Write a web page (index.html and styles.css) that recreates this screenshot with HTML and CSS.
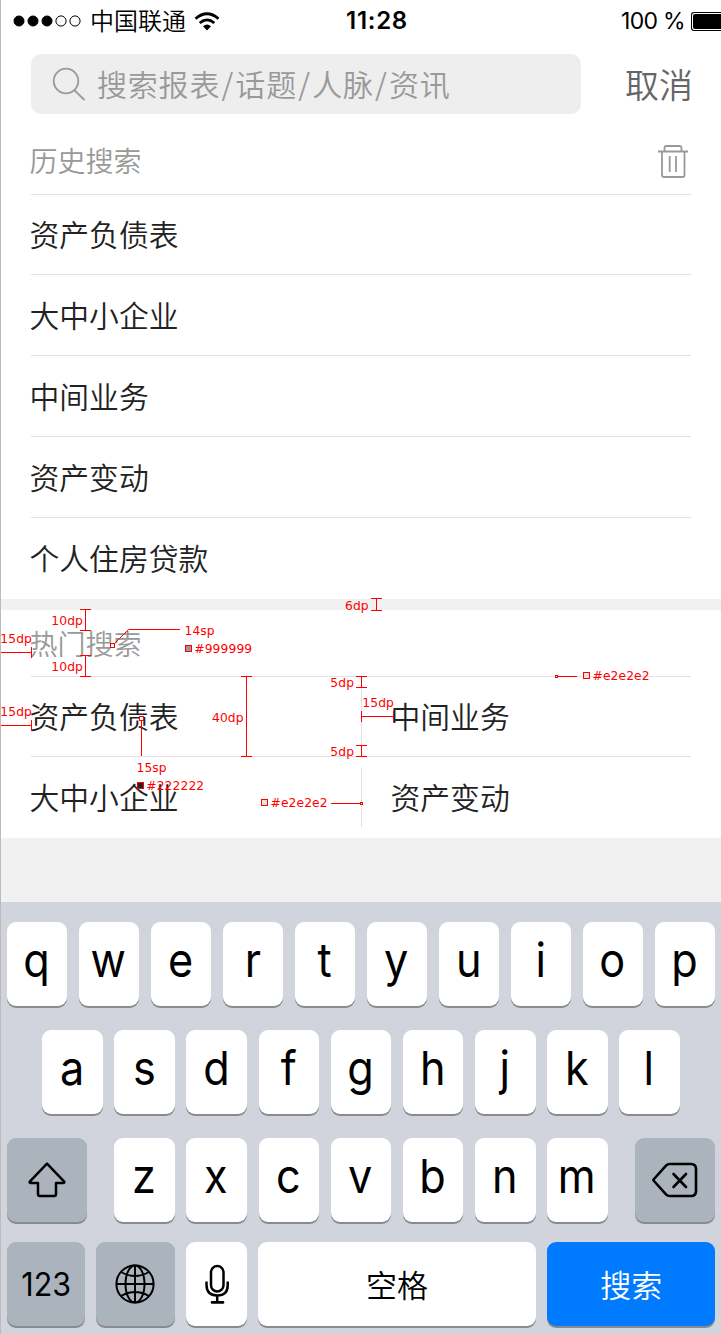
FILE: index.html
```html
<!DOCTYPE html>
<html lang="zh-CN">
<head>
<meta charset="utf-8">
<title>搜索</title>
<link rel="stylesheet" href="styles.css">
</head>
<body>
<div class="screen">
  <header class="status">
    <div class="carrier">
      <svg class="signal" width="69" height="12" viewBox="0 0 69 12"><g stroke="#000"><circle cx="6" cy="6" r="5"/><circle cx="20" cy="6" r="5"/><circle cx="34" cy="6" r="5"/><circle cx="48" cy="6" r="5.1" fill="none"/><circle cx="62" cy="6" r="5.1" fill="none"/></g></svg>
      <span class="carrier-name">中国联通</span>
      <svg class="wifi" width="26" height="19" viewBox="0 0 26 19"><g fill="none" stroke="#000" stroke-width="2.8"><path d="M1.5 6.7Q13-3.2 24.5 6.7"/><path d="M5.7 11Q13 4.8 20.3 11"/></g><path d="M9 14.2q4-3.2 8 0l-4 4.3z"/></svg>
    </div>
    <span class="time">11:28</span>
    <div class="power"><span>100 %</span><span class="battery"><i class="charge"></i></span></div>
  </header>

  <div class="searchbar">
    <div class="field">
      <svg width="34" height="34" viewBox="0 0 34 34" fill="none" stroke="#999" stroke-width="1.8"><circle cx="14" cy="14" r="12.3"/><path d="M22.3 23.2L32.5 33"/></svg>
      <span class="placeholder">搜索报表<i>/</i>话题<i>/</i>人脉<i>/</i>资讯</span>
    </div>
    <span class="cancel">取消</span>
  </div>

  <section class="history">
    <div class="heading"><span>历史搜索</span>
      <svg class="trash" width="30" height="33" viewBox="0 0 30 33" fill="none" stroke="#999" stroke-width="1.8"><path d="M0 6.5h30M6.5 6V3q0-2 2-2h13q2 0 2 2v3M4 6.5V30q0 2 2 2h18.500q2 0 2-2V6.500M11.700 11v16M18 11v16"/></svg>
    </div>
    <div class="item first">资产负债表</div>
    <div class="item">大中小企业</div>
    <div class="item">中间业务</div>
    <div class="item">资产变动</div>
    <div class="item last">个人住房贷款</div>
  </section>

  <section class="hot">
    <div class="heading hot-heading"><span>热门搜索</span></div>
    <div class="pair"><span>资产负债表</span><i class="divider"></i><span>中间业务</span></div>
    <div class="pair pair-last"><span>大中小企业</span><i class="divider"></i><span>资产变动</span></div>
  </section>

  <div class="keyboard">
    <div class="keys row-top"><b class="key"><span>q</span></b><b class="key"><span>w</span></b><b class="key"><span>e</span></b><b class="key"><span>r</span></b><b class="key"><span>t</span></b><b class="key"><span>y</span></b><b class="key"><span>u</span></b><b class="key"><span>i</span></b><b class="key"><span>o</span></b><b class="key"><span>p</span></b></div>
    <div class="keys row-home"><b class="key"><span>a</span></b><b class="key"><span>s</span></b><b class="key"><span>d</span></b><b class="key"><span>f</span></b><b class="key"><span>g</span></b><b class="key"><span>h</span></b><b class="key"><span>j</span></b><b class="key"><span>k</span></b><b class="key"><span>l</span></b></div>
    <div class="keys row-bottom">
      <b class="key gray"><svg width="38" height="36" viewBox="0 0 38 36" fill="none" stroke="#000" stroke-width="2.5" stroke-linejoin="round"><path d="M19 1.700L2 19.300q-1 1.700 1 1.700h7V32q0 2 2 2h14q2 0 2-2V21h7q2 0 1-1.700z"/></svg></b>
      <div class="letters"><b class="key"><span>z</span></b><b class="key"><span>x</span></b><b class="key"><span>c</span></b><b class="key"><span>v</span></b><b class="key"><span>b</span></b><b class="key"><span>n</span></b><b class="key"><span>m</span></b></div>
      <b class="key gray"><svg width="46" height="36" viewBox="0 0 46 36" fill="none" stroke="#000" stroke-width="2.600" stroke-linejoin="round"><path d="M18 2H39q5 0 5 5v22q0 5-5 5H18q-2.500 0-4-1.600L2 19q-1-1 0-2L14 3.600Q15.500 2 18 2z"/><path d="M21.500 12l12.500 13M34 12L21.500 25" stroke-linecap="round"/></svg></b>
    </div>
    <div class="keys row-space">
      <b class="key gray numeric"><span>123</span></b>
      <b class="key gray"><svg width="40" height="40" viewBox="0 0 40 40" fill="none" stroke="#000" stroke-width="2"><circle cx="20" cy="20" r="18.600"/><ellipse cx="20" cy="20" rx="9.500" ry="18.600"/><path d="M20 1v38M1 20h38M6 8q14 8 28 0M6 32q14-8 28 0"/></svg></b>
      <b class="key"><svg class="mic" width="24" height="40" viewBox="0 0 24 40" fill="none" stroke="#000" stroke-width="2.500"><rect x="6" y="2" width="12.500" height="25.500" rx="6.250"/><path d="M1.500 17.500v3.300q0 10.700 10.700 10.700T22.700 20.800v-3.300M12.200 31.500V38"/><path d="M7 38.400h11" stroke-width="2.600" stroke-linecap="round"/></svg></b>
      <b class="key word">空格</b>
      <b class="key word go">搜索</b>
    </div>
  </div>

  <!-- Dimension and colour notes laid over the design -->
  <svg class="notes" width="721" height="250" viewBox="0 590 721 250">
    <g class="rules">
      <path d="M376.500 598v13M371 598.500h11M371 610.500h11"/>
      <path d="M85.500 609v22M80 609.500h11M80 630.500h11M85.500 655v22M80 655.500h11M80 676.500h11"/>
      <path d="M0 652.500h32M.5 647v11M31.500 647v11M0 725.500h32M.5 720v11M31.500 720v11"/>
      <path d="M114 644L128.500 629.500H180"/>
      <path d="M246.500 676v81M241 676.500h11M241 756.500h11"/>
      <path d="M141.500 721v35"/>
      <path d="M361.500 676v12M356 676.500h11M356 687.500h11M361.500 745v12M356 745.500h11M356 756.500h11"/>
      <path d="M361 716.500h33M361.500 711v11M393.500 711v11"/>
      <path d="M331 803.500h29M558 676.500h19"/>
    </g>
    <g class="marks">
      <rect x="110.500" y="643.500" width="4" height="4" fill="#fff"/>
      <rect x="139.500" y="716.500" width="4" height="4" fill="#fff"/>
      <rect x="360.500" y="802.500" width="2" height="2" fill="#e2e2e2"/>
      <rect x="555.500" y="675.500" width="2" height="2" fill="#e2e2e2"/>
      <rect x="185.500" y="645.500" width="6" height="6" fill="#999"/>
      <rect x="137.500" y="782.500" width="6" height="6" fill="#222"/>
      <rect x="261.500" y="799.500" width="6" height="6" fill="#e2e2e2"/>
      <rect x="583.500" y="672.500" width="6" height="6" fill="#e2e2e2"/>
    </g>
    <g class="labels">
      <text x="345" y="610">6dp</text>
      <text x="51.300" y="625">10dp</text>
      <text x="51.300" y="671">10dp</text>
      <text x="0.300" y="643">15dp</text>
      <text x="0.300" y="716">15dp</text>
      <text x="184.500" y="635">14sp</text>
      <text x="194.300" y="653">#999999</text>
      <text x="212" y="722">40dp</text>
      <text x="136.500" y="772">15sp</text>
      <text x="146.300" y="790">#222222</text>
      <text x="330.300" y="687">5dp</text>
      <text x="330.300" y="756">5dp</text>
      <text x="362.300" y="707">15dp</text>
      <text x="270.500" y="807">#e2e2e2</text>
      <text x="592.500" y="680">#e2e2e2</text>
    </g>
  </svg>
</div>
</body>
</html>
```

FILE: styles.css
```css
* { box-sizing: border-box; }
body { margin: 0; background: #fff; }
.screen {
  position: relative;
  width: 721px;
  height: 1334px;
  overflow: hidden;
  border-left: 1px solid #bbb;
  background: #f1f1f1;
  font-family: "Noto Sans CJK SC", sans-serif;
  font-weight: 350;
  color: #222;
}
svg { display: block; flex: none; }

.status {
  display: grid;
  grid-template-columns: 1fr auto 1fr;
  align-items: center;
  height: 42px;
  padding-left: 13px;
  background: #fff;
  color: #000;
  font: 400 23px/40px Inter, "Noto Sans CJK SC", sans-serif;
}
.carrier { display: flex; align-items: center; height: 40px; }
.signal { margin-left: -1px; }
.carrier-name { margin-left: 8px; font: 350 24px/38px "Noto Sans CJK SC", sans-serif; height: 40px; }
.wifi { margin-left: 8px; }
.time { font-size: 24px; font-weight: 600; letter-spacing: .7px; margin-left: 19px; }
.power { display: flex; align-items: center; justify-content: flex-end; white-space: nowrap; letter-spacing: -.7px; font-weight: 370; line-height: 38px; }
.battery { width: 30px; height: 19px; margin-left: 6px; padding: 1px 0 1px 1px; border: 1px solid #000; border-right: 0; border-radius: 3px 0 0 3px; }
.charge { display: block; height: 15px; background: #000; border-radius: 2px 0 0 2px; }

.searchbar { display: flex; align-items: center; height: 84px; padding: 0 29px 0 30px; background: #fff; justify-content: space-between; }
.field { display: flex; align-items: center; gap: 11px; width: 550px; height: 60px; padding-left: 21px; border-radius: 10px; background: #eee; color: #999; }
.placeholder { height: 60px; font-size: 30px; line-height: 59px; letter-spacing: .8px; }
.placeholder i { padding: 0 1.300px; font-style: normal; }
.cancel { height: 60px; font-size: 34px; line-height: 60px; color: #666; margin-right: -1px; }

.history { padding: 0 30px; height: 473px; background: #fff; }
.heading { display: flex; align-items: center; justify-content: space-between; height: 69px; border-bottom: 1px solid #e2e2e2; color: #999; font-size: 28px; line-height: 68px; }
.heading span { margin-left: -1.500px; }
.trash { margin: 2px 3px 0 0; }
.item { height: 81px; border-bottom: 1px solid #e2e2e2; font-size: 29.800px; line-height: 79px; text-indent: -1.500px; }
.item.first { height: 80px; line-height: 76px; }
.item.last { border-bottom: 0; }

.hot { height: 228px; margin-top: 11px; padding: 0 30px; background: #fff; }
.hot-heading { height: 67px; line-height: 66px; }
.pair { display: grid; grid-template-columns: 330px 1px 1fr; height: 80px; border-bottom: 1px solid #e2e2e2; font-size: 29.800px; line-height: 77px; }
.pair span { text-indent: -1.500px; }
.pair span:last-child { padding-left: 30px; }
.pair-last { height: 81px; border: 0; line-height: 79px; }
.divider { margin: 11px 0; background: #e2e2e2; }

.keyboard { height: 432px; margin-top: 64px; padding: 20px 6px 8px; background: #d1d4dc; color: #000; }
.keys { display: flex; gap: 12px; height: 84px; }
.key { display: flex; flex: 1 1 0; align-items: center; justify-content: center; height: 84px; border-radius: 9px; background: #fff; box-shadow: 0 2px 0 #898b90; font: 370 47px/76px Inter, sans-serif; padding: 0 1px 8px 0; }
.key span { transform: scaleX(.92); }
.row-home { margin-top: 24px; padding: 0 35px; gap: 11.600px; }
.row-bottom { margin-top: 24px; gap: 27px; }
.row-bottom .gray, .row-space .gray { background: #abb3bd; }
.row-bottom > .gray { flex: 0 0 80.300px; }
.letters { display: flex; flex: 1; gap: 11.600px; }
.key:has(svg) { padding: 0; }
.mic { margin-left: 1px; }
.row-space { display: grid; grid-template-columns: 77.500px 78.500px 60.500px 277.500px 1fr; gap: 11.600px; margin-top: 20px; }
.key.numeric { padding: 2px 0 0; font-size: 32px; line-height: 82px; }
.key.numeric span { transform: scaleX(.95); }
.key.word { padding: 0; font: 350 31px/84px "Noto Sans CJK SC", sans-serif; }
.key.go { background: #007aff; color: #fff; }

.notes { position: absolute; top: 590px; left: -1px; }
.rules { fill: none; stroke: #f00; stroke-width: 1; }
.marks { stroke: #f00; stroke-width: 1; }
.labels { fill: #f00; font: 400 12.300px "DejaVu Sans", sans-serif; letter-spacing: .1px; }
```
